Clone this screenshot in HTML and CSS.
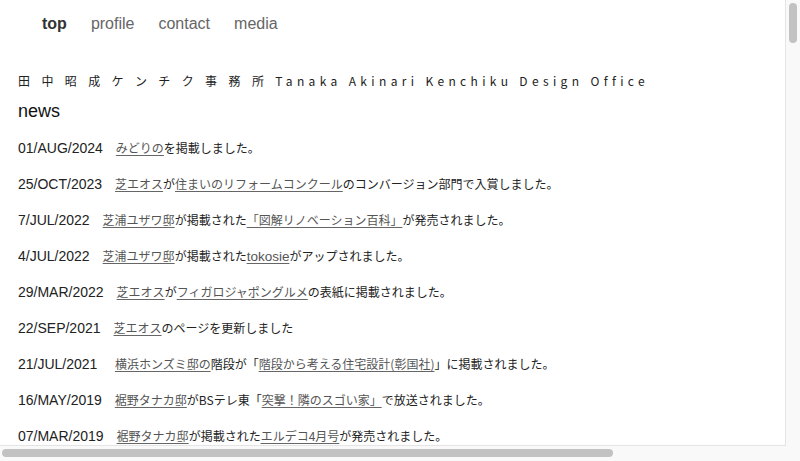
FILE: index.html
```html
<!DOCTYPE html>
<html lang="ja">
<head>
<meta charset="utf-8">
<title>田中昭成ケンチク事務所</title>
<link rel="stylesheet" href="styles.css">
</head>
<body>
<div class="window">
<div class="viewport">
<div class="page">
  <nav class="nav">
    <a class="nav-item nav-current" href="#">top</a>
    <a class="nav-item" href="#">profile</a>
    <a class="nav-item" href="#">contact</a>
    <a class="nav-item" href="#">media</a>
  </nav>
  <div class="title">田 中 昭 成 ケ ン チ ク 事 務 所 Tanaka Akinari Kenchiku Design Office</div>
  <h2 class="heading">news</h2>
  <ul class="news">
    <li class="row"><span class="date">01/AUG/2024</span><a class="link" href="#">みどりの</a>を掲載しました。</li>
    <li class="row"><span class="date">25/OCT/2023</span><a class="link" href="#">芝エオス</a>が<a class="link" href="#">住まいのリフォームコンクール</a>のコンバージョン部門で入賞しました。</li>
    <li class="row"><span class="date">7/JUL/2022</span><a class="link" href="#">芝浦ユザワ邸</a>が掲載された<a class="link" href="#">「図解リノベーション百科」</a>が発売されました。</li>
    <li class="row"><span class="date">4/JUL/2022</span><a class="link" href="#">芝浦ユザワ邸</a>が掲載された<a class="link latin" href="#">tokosie</a>がアップされました。</li>
    <li class="row"><span class="date">29/MAR/2022</span><a class="link" href="#">芝エオス</a>が<a class="link" href="#">フィガロジャポングルメ</a>の表紙に掲載されました。</li>
    <li class="row"><span class="date">22/SEP/2021</span><a class="link" href="#">芝エオス</a>のページを更新しました</li>
    <li class="row"><span class="date date-wide">21/JUL/2021</span><a class="link" href="#">横浜ホンズミ邸の</a>階段が「<a class="link" href="#">階段から考える住宅設計(彰国社)</a>」に掲載されました。</li>
    <li class="row"><span class="date">16/MAY/2019</span><a class="link" href="#">裾野タナカ邸</a>がBSテレ東「<a class="link" href="#">突撃！隣のスゴい家」</a>で放送されました。</li>
    <li class="row"><span class="date">07/MAR/2019</span><a class="link" href="#">裾野タナカ邸</a>が掲載された<a class="link" href="#">エルデコ4月号</a>が発売されました。</li>
  </ul>
</div>
</div>
<div class="vbar"><div class="vthumb"></div></div>
<div class="hbar"><div class="hthumb"></div></div>
<div class="corner"></div>
</div>
</body>
</html>
```
FILE: styles.css
```css
html, body {
  margin: 0;
  padding: 0;
  background: #ffffff;
  overflow: hidden;
}

.window {
  width: 800px;
  height: 461px;
  display: grid;
  grid-template-columns: 786px 14px;
  grid-template-rows: 446px 15px;
}

.viewport {
  overflow: hidden;
  border-right: 1px solid #e4e4e4;
  border-bottom: 1px solid #e4e4e4;
}

.vbar {
  background: #f9f9f9;
  padding: 3px 3px 0 3px;
}
.vthumb {
  width: 8px;
  height: 40px;
  border-radius: 4px;
  background: #c2c2c2;
}

.hbar {
  background: #f9f9f9;
  padding: 3px 0 0 2px;
}
.hthumb {
  width: 611px;
  height: 8px;
  border-radius: 4px;
  background: #c2c2c2;
}

.corner {
  background: #f9f9f9;
}

.page {
  width: 1011px;
  min-height: 5000px;
  box-sizing: border-box;
  padding: 0 8px;
  font-family: "Liberation Sans", "Noto Sans CJK JP", sans-serif;
  color: #222;
}

.nav {
  display: flex;
  gap: 24px;
  padding-left: 34px;
  height: 47px;
  align-items: center;
  font-size: 16px;
}
.nav-item {
  color: #666;
  text-decoration: none;
}
.nav-current {
  color: #333;
  font-weight: bold;
}

.title {
  margin-top: 24px;
  padding-left: 10px;
  font-family: "Noto Sans CJK JP", sans-serif;
  font-size: 12px;
  line-height: 20px;
  letter-spacing: 4.35px;
  color: #222;
  white-space: nowrap;
}

.heading {
  margin: 8px 0 0 10px;
  font-size: 18px;
  line-height: 24px;
  font-weight: normal;
  color: #111;
}

.news {
  list-style: none;
  margin: 7px 0 0 10px;
  padding: 0;
}
.row {
  height: 36px;
  line-height: 36px;
  font-family: "Noto Sans CJK JP", sans-serif;
  font-size: 12px;
  color: #222;
  white-space: nowrap;
}
.date {
  font-family: "Liberation Sans", sans-serif;
  font-size: 14px;
  margin-right: 13px;
  color: #222;
}
.date-wide {
  margin-right: 17.5px;
}
.link {
  color: #555;
  text-decoration: underline;
  text-decoration-color: #666;
  text-underline-offset: 2px;
}
.latin {
  font-family: "Liberation Sans", sans-serif;
  font-size: 13.5px;
}
```
